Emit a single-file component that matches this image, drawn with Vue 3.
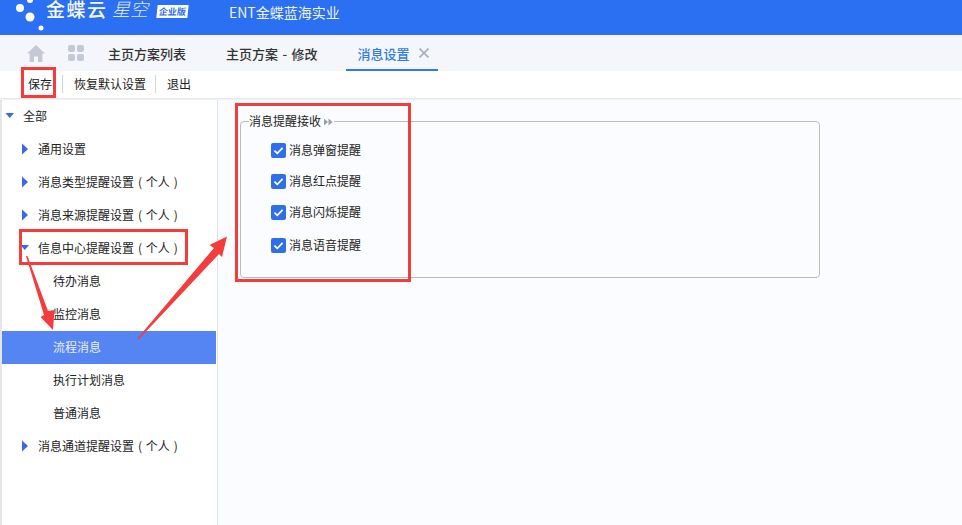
<script setup>
const tree = [
  { label: '全部', level: 0, open: true },
  { label: '通用设置', level: 1 },
  { label: '消息类型提醒设置 ( 个人 )', level: 1 },
  { label: '消息来源提醒设置 ( 个人 )', level: 1 },
  { label: '信息中心提醒设置 ( 个人 )', level: 1, open: true },
  { label: '待办消息', level: 2 },
  { label: '监控消息', level: 2 },
  { label: '流程消息', level: 2, active: true },
  { label: '执行计划消息', level: 2 },
  { label: '普通消息', level: 2 },
  { label: '消息通道提醒设置 ( 个人 )', level: 1 },
]
const options = ['消息弹窗提醒', '消息红点提醒', '消息闪烁提醒', '消息语音提醒']
</script>

<template>
  <div class="page">
    <header class="header">
      <svg class="dots" width="46" height="35" viewBox="0 0 46 35">
        <circle cx="20" cy="8" r="4" fill="#fff" />
        <circle cx="30" cy="17" r="4.5" fill="#fff" />
        <circle cx="41" cy="28" r="2.5" fill="#fff" />
        <circle cx="30" cy="0" r="3" fill="#fff" />
      </svg>
      <span class="brand">金蝶云</span>
      <span class="product">星空</span>
      <span class="badge">企业版</span>
      <span class="org">ENT金蝶蓝海实业</span>
    </header>

    <nav class="tabs">
      <svg class="home" width="18" height="17" viewBox="0 0 18 17">
        <path d="M9 0 L18 8.5 H15.4 V17 H11 V11.5 H7 V17 H2.6 V8.5 H0 Z" fill="#c5c9d6" />
      </svg>
      <span class="apps"><i></i><i></i><i></i><i></i></span>
      <span class="tab first">主页方案列表</span>
      <span class="tab second">主页方案 - 修改</span>
      <span class="tab active">
        消息设置
        <svg width="10" height="10" viewBox="0 0 10 10">
          <path d="M0.5 0.5 L9.5 9.5 M9.5 0.5 L0.5 9.5" stroke="#a9aec0" stroke-width="1.6" fill="none" />
        </svg>
      </span>
    </nav>

    <div class="toolbar">
      <span class="tool">保存</span>
      <span class="tool">恢复默认设置</span>
      <span class="tool">退出</span>
    </div>

    <div class="body">
      <aside class="side">
        <div
          v-for="row in tree"
          :key="row.label"
          class="row"
          :class="['lv' + row.level, { on: row.active }]"
        >
          <svg v-if="row.level < 2" class="caret" width="10" height="12" viewBox="0 0 10 12">
            <path v-if="row.open" d="M0.5 3 H9 L4.75 8 Z" fill="#3b66f0" />
            <path v-else d="M2 0.5 L8 6 L2 11.5 Z" fill="#3b66f0" />
          </svg>
          <span>{{ row.label }}</span>
        </div>
      </aside>
      <main class="main">
        <fieldset class="group">
          <legend class="legend">
            消息提醒接收
            <svg width="9" height="8" viewBox="0 0 9 8">
              <path d="M0 0.5 L4 4 L0 7.5 Z M4.5 0.5 L8.5 4 L4.5 7.5 Z" fill="#9a9ea8" />
            </svg>
          </legend>
          <label v-for="opt in options" :key="opt" class="check">
            <svg width="15" height="15" viewBox="0 0 15 15">
              <rect width="15" height="15" rx="2" fill="#2f6fec" />
              <path d="M3.4 7.6 L6.3 10.4 L11.6 4.8" stroke="#fff" stroke-width="1.7" fill="none" />
            </svg>
            <span class="check-text">{{ opt }}</span>
          </label>
        </fieldset>
      </main>
    </div>

    <svg class="marks" width="962" height="525" viewBox="0 0 962 525">
      <g fill="none" stroke="#f53c3c" stroke-width="3">
        <rect x="22.5" y="68.5" width="32" height="28" />
        <rect x="20.5" y="230.5" width="166" height="33" />
        <rect x="236.5" y="104.5" width="173" height="176" />
      </g>
      <g fill="#f53c3c">
        <path d="M26 256 L27.5 256 L48 311 L54.5 310 L53 330 L40.5 317 L44 315 Z" />
        <path d="M137 339 L214 248 L209.5 245 L227 236.5 L222 257 L219 254 L138.5 339.5 Z" />
      </g>
    </svg>
  </div>
</template>

<style scoped>
.page {
  position: relative;
  width: 962px;
  height: 525px;
  overflow: hidden;
  display: flex;
  flex-direction: column;
  background: #fbfcff;
  color: #222;
  font: 12px "Noto Sans CJK SC", "Noto Sans", sans-serif;
}
.header {
  flex: 0 0 35px;
  display: flex;
  align-items: flex-start;
  background: #2b6ff2;
  color: #fff;
}
.dots { flex: none; }
.brand {
  font-family: "Liberation Sans", "Noto Sans CJK SC", sans-serif;
  font-size: 19px;
  font-weight: 500;
  line-height: 22px;
  width: 66px;
  letter-spacing: 1.5px;
  margin-top: 0;
  opacity: .95;
}
.product {
  font-family: "Liberation Sans", "Noto Sans CJK SC", sans-serif;
  font-size: 18px;
  font-style: italic;
  font-weight: 300;
  line-height: 21px;
  width: 45px;
  margin-top: 0;
  opacity: .85;
}
.badge {
  width: 31px;
  height: 13px;
  margin-top: 5px;
  background: #fff;
  color: #2b6ff2;
  font-size: 9px;
  font-weight: 700;
  line-height: 13px;
  text-align: center;
  transform: skewX(-6deg);
}
.org {
  margin-left: 41px;
  margin-top: 2px;
  line-height: 20px;
  font-size: 14px;
  opacity: .92;
}
.tabs {
  flex: 0 0 36px;
  display: flex;
  align-items: center;
  padding-left: 27px;
  background: #f4f6fb;
}
.home { flex: none; }
.apps {
  display: grid;
  grid-template-columns: 7px 7px;
  gap: 2px;
  margin-left: 23px;
}
.apps i {
  width: 7px;
  height: 7px;
  border-radius: 2px;
  background: #c5c9d6;
}
.tab {
  font-size: 13px;
  font-weight: 500;
  color: #333;
  white-space: nowrap;
}
.tab.first { margin-left: 24px; }
.tab.second { margin-left: 40px; word-spacing: 1.5px; }
.tab.active {
  align-self: stretch;
  display: flex;
  align-items: center;
  gap: 9px;
  margin-left: 28px;
  width: 92px;
  box-sizing: border-box;
  padding: 2px 0 0 12px;
  color: #2f7bf0;
  border-bottom: 2px solid #2f7bf0;
}
.toolbar {
  flex: 0 0 27px;
  box-sizing: border-box;
  display: flex;
  align-items: center;
  padding: 0 0 2px 16px;
  background: #fff;
  box-shadow: 0 1px 2px rgba(0, 0, 0, .12);
  position: relative;
}
.tool {
  padding: 0 12px;
  line-height: 18px;
  color: #222;
}
.tool + .tool { border-left: 1px solid #cfd6e4; padding-left: 11px; padding-right: 9px; }
.tool + .tool + .tool { padding-left: 11px; }
.tool:first-child { padding-right: 10px; }
.body {
  flex: 1;
  display: flex;
  min-height: 0;
  padding-top: 2px;
}
.side {
  flex: 0 0 218px;
  box-sizing: border-box;
  background: #fff;
  border-left: 2px solid #e6e6e6;
  border-right: 1px solid #e2e3e6;
}
.row {
  box-sizing: border-box;
  height: 33px;
  margin-right: 1px;
  padding-bottom: 2px;
  display: flex;
  align-items: center;
  color: #222;
  white-space: nowrap;
  word-spacing: 1.2px;
}
.row.lv0 { padding-left: 3px; }
.row.lv1 { padding-left: 18px; }
.row.lv2 { padding-left: 51px; }
.caret { flex: none; margin-right: 8px; }
.row.on {
  background: #5584f3;
  color: #e9efff;
}
.main { flex: 1; min-width: 0; }
.group {
  box-sizing: border-box;
  width: 580px;
  height: 165px;
  margin: 13px 0 0 22px;
  padding: 14px 0 0 30px;
  border: 1px solid #b9bcc3;
  border-radius: 4px;
  display: block;
}
.legend {
  margin-left: -22px;
  padding: 0 1px 0 0;
  line-height: 16px;
  white-space: nowrap;
}
.check {
  display: flex;
  align-items: center;
  gap: 3px;
  height: 15px;
  margin-bottom: 16px;
}
.check-text {
  line-height: 15px;
  margin-top: -2px;
}
.check:nth-of-type(3) { margin-bottom: 18px; }
.marks {
  position: absolute;
  left: 0;
  top: 0;
  pointer-events: none;
}
</style>
